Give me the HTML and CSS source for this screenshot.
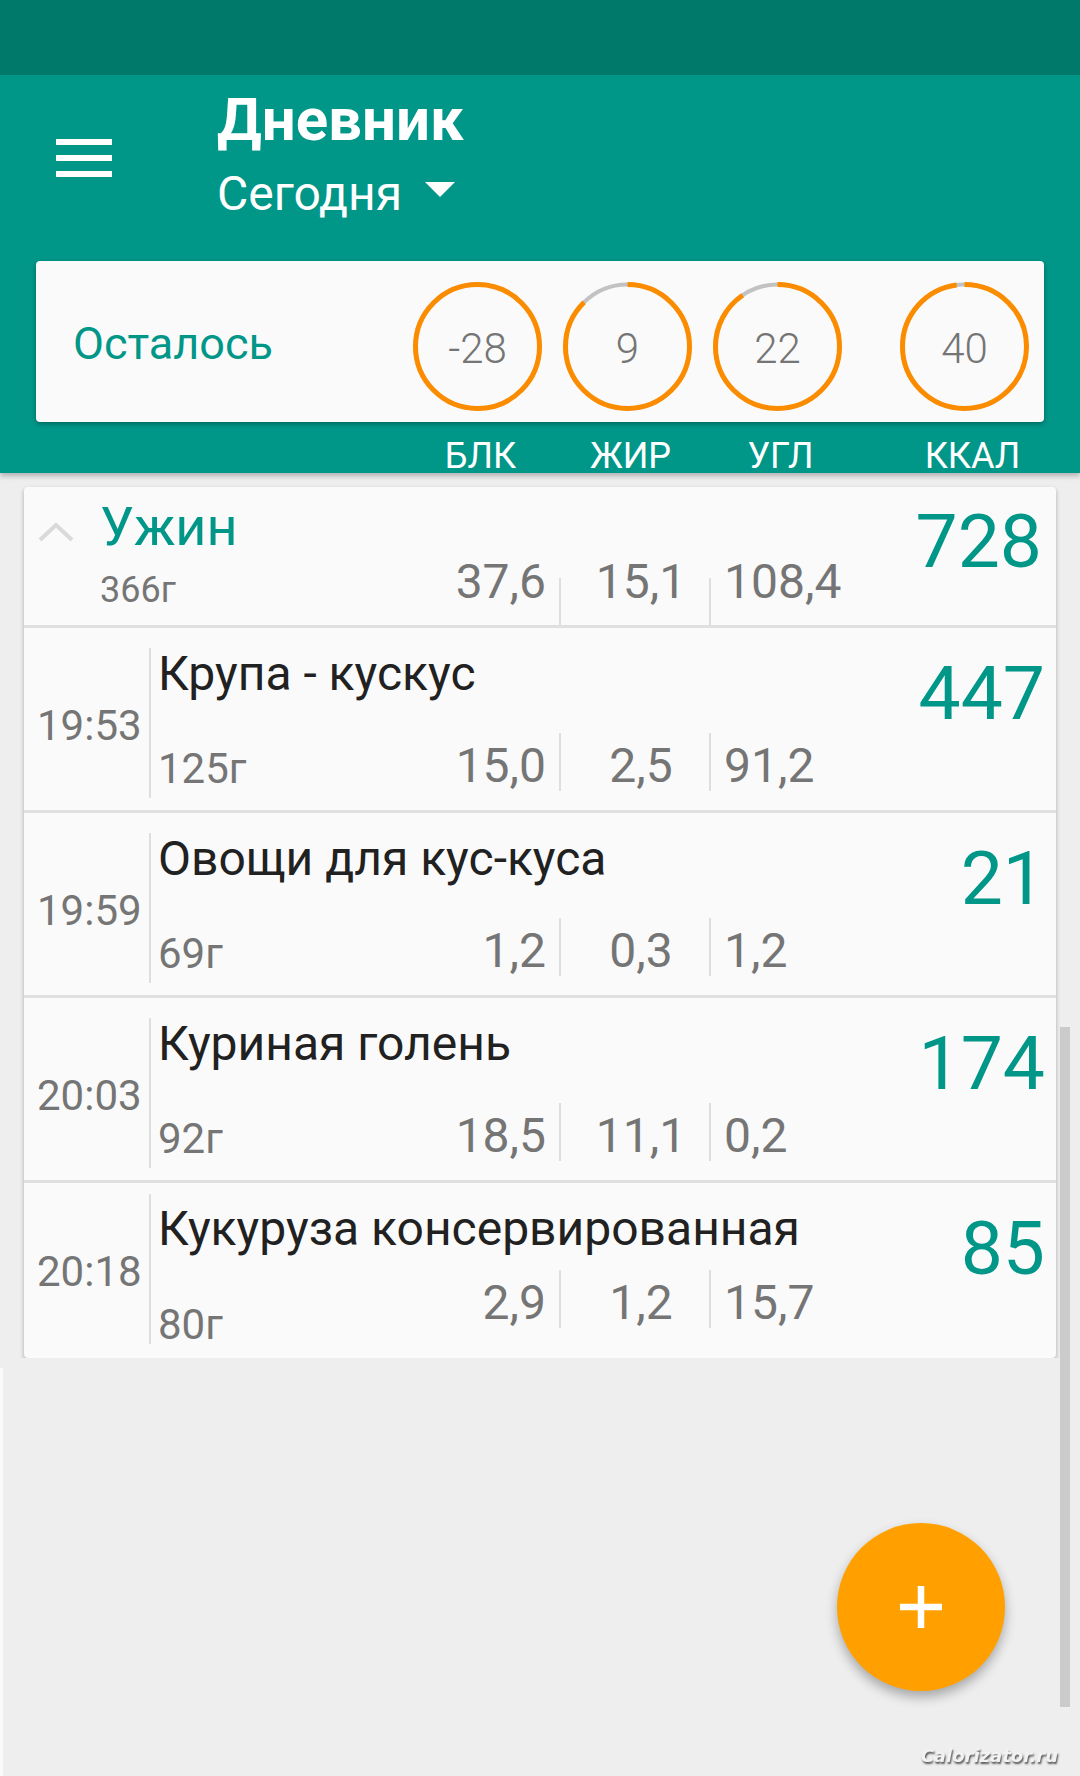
FILE: index.html
```html
<!DOCTYPE html>
<html lang="ru">
<head>
    <meta charset="UTF-8">
    <meta name="viewport" content="width=device-width" />
    <title>Дневник</title>
<link rel="stylesheet" href="styles.css">
</head>

<body>
<div class=status></div>

<header class=appbar>
  <div class=toolbar>
    <div class=burger><i></i><i></i><i></i></div>
    <div class=heading>
      <h1>Дневник</h1>
      <div class=day>Сегодня<span class=caret></span></div>
    </div>
  </div>

  <div class=summary>
    <div class=left-label>Осталось</div>
    <div class=ring>
      <svg viewBox="0 0 129 129"><circle class=track cx=64.5 cy=64.5 r=62 /><circle class=arc cx=64.5 cy=64.5 r=62 stroke-dasharray="390 400" /></svg>
      <span>-28</span>
    </div>
    <div class=ring>
      <svg viewBox="0 0 129 129"><circle class=track cx=64.5 cy=64.5 r=62 /><circle class=arc cx=64.5 cy=64.5 r=62 stroke-dasharray="341 400" /></svg>
      <span>9</span>
    </div>
    <div class=ring>
      <svg viewBox="0 0 129 129"><circle class=track cx=64.5 cy=64.5 r=62 /><circle class=arc cx=64.5 cy=64.5 r=62 stroke-dasharray="352 400" /></svg>
      <span>22</span>
    </div>
    <div class="ring wide">
      <svg viewBox="0 0 129 129"><circle class=track cx=64.5 cy=64.5 r=62 /><circle class=arc cx=64.5 cy=64.5 r=62 stroke-dasharray="381 400" /></svg>
      <span>40</span>
    </div>
  </div>

  <div class=legend>
    <span>БЛК</span>
    <span>ЖИР</span>
    <span>УГЛ</span>
    <span class=wide>ККАЛ</span>
  </div>
</header>

<section class=meal>
  <div class="row head">
    <div class=lead>
      <svg class=chevron viewBox="0 0 36 19"><polyline points="2,17 18,2 34,17" /></svg>
    </div>
    <div class=body>
      <div class=title>Ужин</div>
      <div class=bottom>
        <div class=grams>366г</div>
        <div class=macros><span>37,6</span><span>15,1</span><span>108,4</span></div>
      </div>
    </div>
    <div class=kcal>728</div>
  </div>

  <div class="row item">
    <div class=time>19:53</div>
    <div class=body>
      <div class=name>Крупа - кускус</div>
      <div class=bottom>
        <div class=grams>125г</div>
        <div class=macros><span>15,0</span><span>2,5</span><span>91,2</span></div>
      </div>
    </div>
    <div class=kcal>447</div>
  </div>

  <div class="row item">
    <div class=time>19:59</div>
    <div class=body>
      <div class=name>Овощи для кус-куса</div>
      <div class=bottom>
        <div class=grams>69г</div>
        <div class=macros><span>1,2</span><span>0,3</span><span>1,2</span></div>
      </div>
    </div>
    <div class=kcal>21</div>
  </div>

  <div class="row item">
    <div class=time>20:03</div>
    <div class=body>
      <div class=name>Куриная голень</div>
      <div class=bottom>
        <div class=grams>92г</div>
        <div class=macros><span>18,5</span><span>11,1</span><span>0,2</span></div>
      </div>
    </div>
    <div class=kcal>174</div>
  </div>

  <div class="row item long">
    <div class=time>20:18</div>
    <div class=body>
      <div class=name>Кукуруза консервированная</div>
      <div class=bottom>
        <div class=grams>80г</div>
        <div class=macros><span>2,9</span><span>1,2</span><span>15,7</span></div>
      </div>
    </div>
    <div class=kcal>85</div>
  </div>
</section>

<div class=edge></div>
<div class=scrollbar></div>
<button class=fab><svg viewBox="0 0 42 42"><path d="M21 0v42M0 21h42" /></svg></button>
<div class=watermark>Calorizator.ru</div>
</body>
</html>
```

FILE: styles.css
```css
body {
    margin: 0;
    background: #eee;
    font-family: Roboto, "Noto Sans", sans-serif;
    color: #757575;
}
.status {
    height: 75px;
    background: #00796b;
}

/* top bar */
.appbar {
    height: 398px;
    background: #009688;
    box-shadow: 0 3px 5px rgba(0,0,0,.25);
}
.toolbar {
    display: flex;
    align-items: flex-start;
    height: 186px;
    box-sizing: border-box;
    padding: 13px 0 0 56px;
    color: white;
}
.burger {
    display: flex;
    flex-direction: column;
    gap: 10px;
    width: 56px;
    margin-top: 51px;
}
.burger i {
    display: block;
    height: 6px;
    background: white;
}
.heading {
    margin-left: 105px;
}
.heading h1 {
    margin: 0;
    font-size: 60px;
    font-weight: bold;
    line-height: 64px;
}
.day {
    display: flex;
    align-items: center;
    margin-top: 14px;
    font-size: 48px;
    line-height: 56px;
}
.caret {
    width: 0;
    height: 0;
    border: 15px solid transparent;
    border-top-color: white;
    border-bottom: 0;
    margin: 0 0 10px 23px;
}

/* remaining card */
.summary {
    display: flex;
    align-items: center;
    height: 161px;
    box-sizing: border-box;
    margin: 0 36px;
    padding: 10px 15px 0 37px;
    background: #fafafa;
    border-radius: 4px;
    box-shadow: 0 2px 4px rgba(0,0,0,.3);
}
.left-label {
    flex: 1;
    margin-bottom: 6px;
    font-size: 45px;
    color: #009688;
}
.ring {
    display: grid;
    place-items: center;
    width: 129px;
    height: 129px;
    margin-left: 21px;
    font-size: 42px;
    font-weight: 300;
}
.ring > * {
    grid-area: 1 / 1;
}
.ring span {
    padding-top: 4px;
}
.ring svg {
    width: 129px;
    height: 129px;
}
.ring .track {
    fill: none;
    stroke: #c2c2c2;
    stroke-width: 4;
}
.ring .arc {
    fill: none;
    stroke: #fb8c00;
    stroke-width: 5;
    transform: rotate(-90deg);
    transform-origin: 64.5px 64.5px;
}
.wide {
    margin-left: 58px;
}
.legend {
    display: flex;
    justify-content: flex-end;
    margin: 0 36px;
    padding: 18px 15px 0 0;
    color: white;
    font-size: 36px;
    line-height: 33px;
}
.legend span {
    width: 129px;
    box-sizing: border-box;
    margin-left: 21px;
    padding-left: 6px;
    text-align: center;
}
.legend span.wide {
    margin-left: 58px;
    padding-left: 16px;
}

/* meal list */
.meal {
    margin: 14px 24px 0;
    background: #fafafa;
    border-radius: 4px;
    box-shadow: 0 2px 4px rgba(0,0,0,.3);
}
.row {
    display: flex;
    border-bottom: 3px solid #e0e0e0;
}
.row:last-child {
    border-bottom: 0;
}
.head {
    height: 138px;
}
.item {
    height: 182px;
}
.item.long {
    height: 175px;
}
.lead {
    width: 76px;
}
.chevron {
    width: 36px;
    height: 19px;
    margin: 36px 0 0 14px;
}
.chevron polyline {
    fill: none;
    stroke: #dadada;
    stroke-width: 4;
}
.time {
    display: flex;
    align-items: center;
    width: 125px;
    box-sizing: border-box;
    margin: 20px 0 12px;
    padding: 4px 0 0 13px;
    font-size: 42px;
}
.body {
    display: flex;
    flex-direction: column;
    width: 712px;
    box-sizing: border-box;
    margin: 20px 0 12px;
    padding: 0 0 7px 7px;
    border-left: 2px solid #dedede;
}
.head .body {
    width: 761px;
    margin: 0;
    padding: 10px 0 0;
    border: 0;
}
.title {
    font-size: 54px;
    line-height: 60px;
    color: #009688;
}
.name {
    margin-top: 2px;
    font-size: 48px;
    line-height: 48px;
    color: #212121;
    white-space: nowrap;
}
.bottom {
    display: flex;
    align-items: flex-end;
    margin-top: auto;
}
.grams {
    flex: 1;
    font-size: 42px;
    line-height: 44px;
}
.head .grams {
    margin-bottom: 17px;
    font-size: 36px;
    line-height: 36px;
}
.macros {
    display: flex;
}
.macros span {
    height: 58px;
    box-sizing: border-box;
    padding-top: 8px;
    font-size: 48px;
    line-height: 50px;
}
.macros span + span {
    background: linear-gradient(#dedede, #dedede) left bottom / 2px 100% no-repeat;
}
.macros span:nth-child(1) {
    width: 150px;
    padding-right: 13px;
    text-align: right;
}
.macros span:nth-child(2) {
    width: 150px;
    padding-left: 14px;
    text-align: center;
}
.macros span:nth-child(3) {
    width: 152px;
    padding-left: 15px;
}
.head .macros span {
    height: auto;
    padding-top: 0;
    padding-bottom: 19px;
    line-height: 48px;
}
.head .macros span + span {
    background-size: 2px 47px;
}
.kcal {
    flex: 1;
    padding: 28px 11px 0 0;
    text-align: right;
    font-size: 75px;
    line-height: 75px;
    color: #009688;
}
.head .kcal {
    padding: 17px 14px 0 0;
}
.long .time, .long .body {
    margin: 11px 0 14px;
}
.long .body {
    padding-bottom: 0;
}
.long .name {
    margin-top: 11px;
}
.long .grams {
    margin-bottom: -3px;
}
.long .macros {
    margin-bottom: 16px;
}

/* overlays */
.edge {
    position: fixed;
    left: 0;
    top: 1368px;
    bottom: 0;
    width: 3px;
    background: #fafafa;
}
.scrollbar {
    position: fixed;
    right: 10px;
    top: 1027px;
    width: 10px;
    height: 680px;
    background: #cbcbcb;
}
.fab {
    position: fixed;
    right: 75px;
    bottom: 85px;
    display: grid;
    place-items: center;
    width: 168px;
    height: 168px;
    padding: 0;
    border: 0;
    border-radius: 50%;
    background: #ffa000;
    box-shadow: 0 6px 12px rgba(0,0,0,.3);
}
.fab svg {
    width: 42px;
    height: 42px;
}
.fab path {
    stroke: white;
    stroke-width: 6.5;
}
.watermark {
    position: fixed;
    right: 22px;
    bottom: 10px;
    font: italic bold 18px "DejaVu Sans", sans-serif;
    color: #f2f2f2;
    text-shadow: 1px 2px 2px #555;
}
```
